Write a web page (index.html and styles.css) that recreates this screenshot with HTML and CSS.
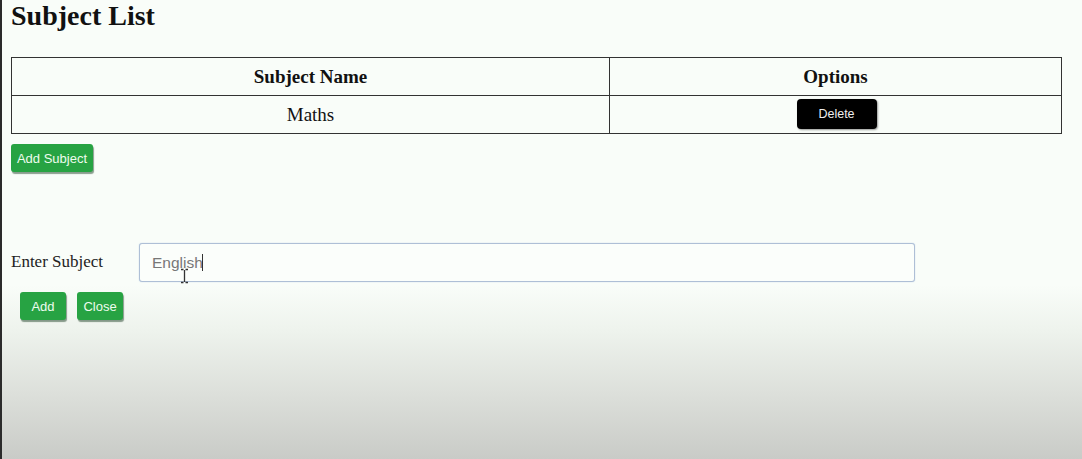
FILE: index.html
```html
<!DOCTYPE html>
<html lang="en">
<head>
<meta charset="utf-8">
<title>Subject List</title>
<link rel="stylesheet" href="styles.css">
</head>
<body>
<div class="page">
  <h1 class="title">Subject List</h1>
  <table class="subjects">
    <colgroup><col class="col-name"><col class="col-opt"></colgroup>
    <thead>
      <tr><th>Subject Name</th><th>Options</th></tr>
    </thead>
    <tbody>
      <tr><td>Maths</td><td><button class="btn btn-dark">Delete</button></td></tr>
    </tbody>
  </table>
  <button class="btn btn-green btn-add-subject">Add Subject</button>

  <div class="form-row">
    <label class="form-label" for="subject">Enter Subject</label>
    <div class="input-wrap">
      <input id="subject" class="form-input" type="text" value="English">
      <span class="caret"></span>
      <svg class="ibeam" width="9" height="16" viewBox="0 0 9 16" aria-hidden="true">
        <path d="M1 1.5h2.5M5.5 1.5H8M4.5 2v12M1 14.5h2.5M5.5 14.5H8" stroke="#333" stroke-width="1.3" fill="none"/>
      </svg>
    </div>
  </div>
  <div class="form-actions">
    <button class="btn btn-green btn-small">Add</button>
    <button class="btn btn-green btn-small">Close</button>
  </div>
</div>
</body>
</html>
```

FILE: styles.css
```css
html {
  height: 100%;
}
body {
  margin: 0;
  min-height: 100%;
  border-left: 2px solid #2b2b2b;
  box-sizing: border-box;
  background: linear-gradient(to bottom, #f9fdf9 0, #f9fdf9 285px, #eef3ed 330px, #dcdfda 395px, #c9cbc7 459px);
  font-family: "Liberation Serif", "Times New Roman", serif;
  color: #111;
}
.page {
  padding: 0 0 0 9px;
}
.title {
  margin: 0;
  font-size: 28px;
  line-height: 32px;
  font-weight: bold;
  color: #111;
}
.subjects {
  margin-top: 25px;
  border-collapse: collapse;
  width: 1051px;
  font-size: 19px;
}
.col-name { width: 598px; }
.subjects th,
.subjects td {
  border: 1px solid #333;
  height: 37px;
  padding: 0;
  text-align: center;
  vertical-align: middle;
}
.subjects th {
  font-weight: bold;
}
.btn {
  font-family: "Liberation Sans", Arial, sans-serif;
  font-size: 12.5px;
  color: #fff;
  border: none;
  cursor: pointer;
  padding: 0;
}
.btn-green {
  background: #27a343;
  border-radius: 3px;
  box-shadow: 1px 2px 1px rgba(0, 40, 10, 0.45);
  color: #eefcee;
  font-size: 13px;
}
.btn-dark {
  background: #000;
  color: #eee;
  width: 80px;
  height: 30px;
  border-radius: 4px;
  box-shadow: 1px 1px 2px rgba(0,0,0,0.4);
  vertical-align: middle;
  margin-left: 2px;
  margin-bottom: 2px;
}
.btn-add-subject {
  display: block;
  margin-top: 10px;
  width: 82px;
  height: 28px;
}
.form-row {
  display: flex;
  align-items: center;
  margin-top: 71px;
}
.form-label {
  width: 128px;
  font-size: 17px;
  line-height: 20px;
  padding-bottom: 2px;
  color: #222;
}
.input-wrap {
  position: relative;
}
.form-input {
  display: block;
  box-sizing: border-box;
  width: 776px;
  height: 39px;
  border: 1px solid #aebfd6;
  border-radius: 3px;
  box-shadow: 0 0 1px rgba(90, 130, 200, 0.5);
  background: #fbfefb;
  padding: 0 0 0 12px;
  font-family: "Liberation Sans", Arial, sans-serif;
  font-size: 15.5px;
  color: #777;
  outline: none;
}
.caret {
  position: absolute;
  left: 63px;
  top: 11px;
  width: 1px;
  height: 17px;
  background: #333;
}
.ibeam {
  position: absolute;
  left: 41px;
  top: 25px;
}
.form-actions {
  display: flex;
  gap: 11px;
  margin-top: 10px;
  padding-left: 9px;
}
.btn-small {
  width: 46px;
  height: 28px;
}
```
